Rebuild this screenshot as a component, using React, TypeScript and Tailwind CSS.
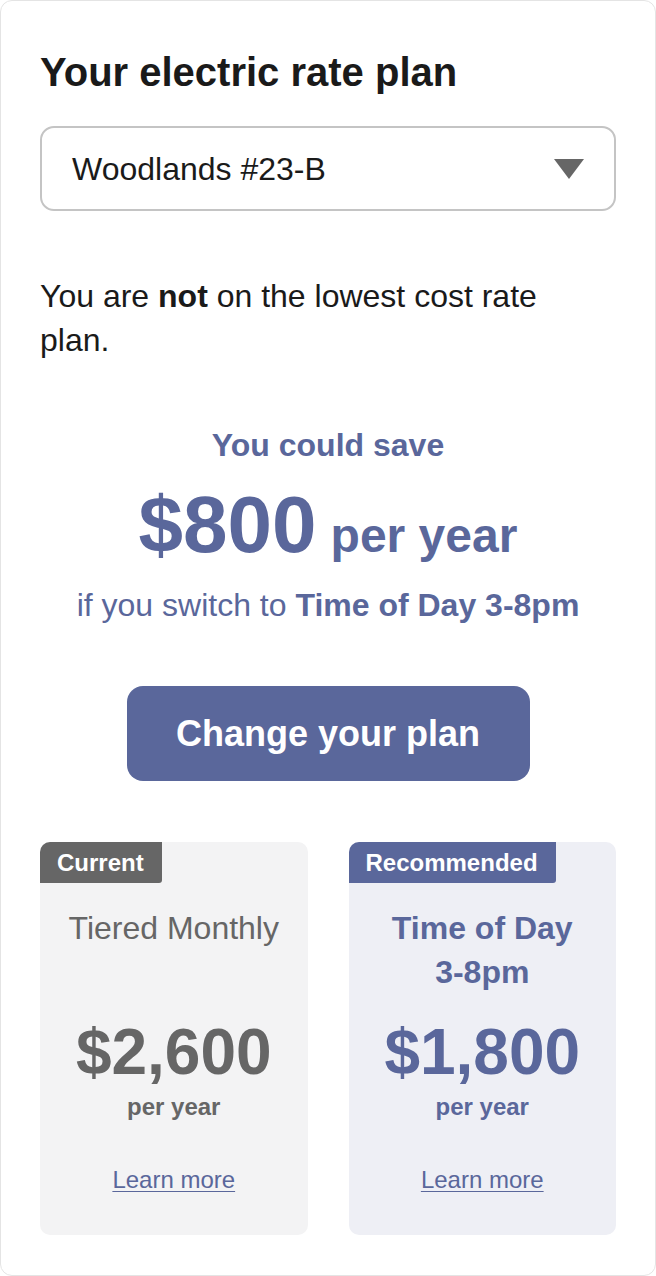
import React from 'react';

const font = { fontFamily: '"Liberation Sans", Arial, Helvetica, sans-serif' };

type Plan = {
  badge: string;
  name: React.ReactNode;
  price: string;
  recommended?: boolean;
};

const PlanCard = ({ badge, name, price, recommended = false }: Plan) => (
  <div
    className={`flex flex-col overflow-hidden rounded-[10px] pb-[39px] ${
      recommended ? 'bg-[#eeeff5]' : 'bg-[#f3f3f4]'
    }`}
  >
    <div
      className={`h-[41px] self-start rounded-br-[3px] pl-[17px] pr-[18px] text-[24px] font-bold leading-[41px] text-white ${
        recommended ? 'bg-[#5a679b]' : 'bg-[#666666]'
      }`}
    >
      {badge}
    </div>
    <div
      className={`mt-[23px] min-h-[88px] px-3 text-center text-[32px] leading-[44px] ${
        recommended ? 'font-bold text-[#5a679b]' : 'text-[#666666]'
      }`}
    >
      {name}
    </div>
    <div
      className={`mt-[26px] text-center text-[64px] font-bold leading-[64px] ${
        recommended ? 'text-[#5a679b]' : 'text-[#666666]'
      }`}
    >
      {price}
    </div>
    <div
      className={`mt-[7px] text-center text-[24px] font-bold leading-[32px] ${
        recommended ? 'text-[#5a679b]' : 'text-[#666666]'
      }`}
    >
      per year
    </div>
    <div className="mt-[41px] text-center text-[24px] leading-[32px]">
      <a href="#" className="text-[#5a679b] underline decoration-1 underline-offset-[3px]">
        Learn more
      </a>
    </div>
  </div>
);

export default function App() {
  return (
    <div className="min-h-[1276px] bg-white" style={font}>
      <div className="mx-auto h-[1276px] w-[656px] rounded-[12px] border border-[#e4e4e4] px-[39px] pt-[47px] pb-[39px]">
        {/* Header + select */}
        <h1 className="text-[40px] font-bold leading-[48px] text-[#1a1a1a]">Your electric rate plan</h1>
        <div className="mt-[30px] flex h-[85px] items-center justify-between rounded-[14px] border-2 border-[#c4c4c4] pl-[30px] pr-[30px]">
          <span className="text-[32px] text-[#1a1a1a]">Woodlands #23-B</span>
          <svg width="30" height="20" viewBox="0 0 30 20" aria-hidden="true">
            <path d="M0 0 H30 L15 20 Z" fill="#666666" />
          </svg>
        </div>

        <p className="mt-[63px] max-w-[560px] text-[32px] leading-[44px] text-[#1a1a1a]">
          You are <span className="font-bold">not</span> on the lowest cost rate plan.
        </p>

        {/* Savings */}
        <div className="mt-[61px] flex flex-col items-center text-[#5a679b]">
          <div className="text-[32px] font-bold leading-[44px]">You could save</div>
          <div className="mt-[18px] flex items-baseline font-bold">
            <span className="text-[80px] leading-[80px]">$800</span>
            <span className="ml-[14px] text-[48px] leading-[48px]">per year</span>
          </div>
          <div className="mt-[18px] text-[32px] leading-[44px]">
            if you switch to <span className="font-bold">Time of Day 3-8pm</span>
          </div>
          <button className="mt-[59px] h-[95px] w-[403px] rounded-[16px] bg-[#5a679b] text-[36px] font-bold text-white">
            Change your plan
          </button>
        </div>

        {/* Plan comparison */}
        <div className="mt-[61px] grid grid-cols-2 gap-[41px]">
          <PlanCard badge="Current" name="Tiered Monthly" price="$2,600" />
          <PlanCard
            badge="Recommended"
            name={
              <>
                Time of Day
                <br />
                3-8pm
              </>
            }
            price="$1,800"
            recommended
          />
        </div>
      </div>
    </div>
  );
}
